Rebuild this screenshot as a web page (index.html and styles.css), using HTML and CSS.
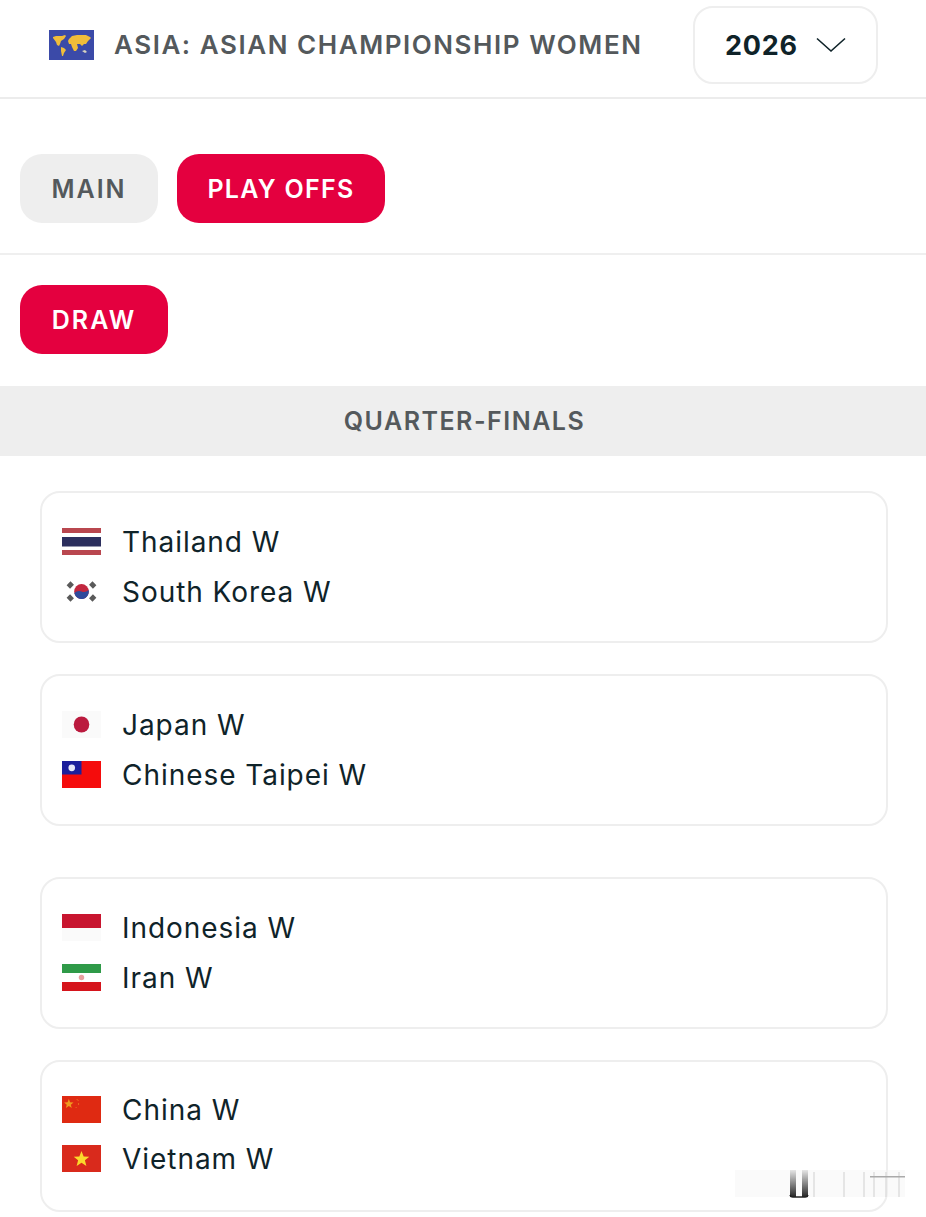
FILE: index.html
```html
<!DOCTYPE html>
<html lang="en">
<head>
<meta charset="utf-8">
<title>Asian Championship Women</title>
<link rel="stylesheet" href="styles.css">
</head>
<body>
<header class="header">
  <div class="league">
    <svg class="league-flag" viewBox="0 0 45 30"><rect width="45" height="30" fill="#3b4aa8"/><path d="M4 7l3-1 6 0 3-1 1 1-2 3-3 2-1 3-1 2-2-1-1-3-3-4z" fill="#f0bd3a"/><path d="M12 17l3 1 2 2-2 3-1 3-1 0-1-5z" fill="#f0bd3a"/><path d="M20 9l3-3 5-1 9 0 4 2 1 1-3 3-2 3-2 0-2 2-2-2-3 0 1 4-2 3-2 0-2-4-1-3-2 0-1-3 1-2z" fill="#f0bd3a"/><path d="M33 21l3-1 2 2-2 1z" fill="#d8d4c0"/></svg>
    <span class="league-name">ASIA: ASIAN CHAMPIONSHIP WOMEN</span>
  </div>
  <div class="season">
    <span class="season-year">2026</span>
    <svg class="chevron" viewBox="0 0 30 16"><path d="M1 1.5L15 14 29 1.5" fill="none" stroke="#0f2329" stroke-width="1.6"/></svg>
  </div>
</header>

<nav class="tabs tabs-main">
  <a class="pill pill-main">MAIN</a>
  <a class="pill pill-active pill-wide">PLAY OFFS</a>
</nav>
<nav class="tabs tabs-sub">
  <a class="pill pill-active pill-draw">DRAW</a>
</nav>

<h2 class="round">QUARTER-FINALS</h2>

<main class="bracket">
  <section class="group">
    <article class="card">
      <div class="team">
        <svg class="flag" viewBox="0 0 40 27" preserveAspectRatio="none"><rect width="40" height="27" fill="#fff"/><rect width="40" height="5" fill="#b9474f"/><rect y="9" width="40" height="9.5" fill="#2c2f5e"/><rect y="22" width="40" height="5" fill="#b9474f"/></svg>
        <span class="team-name">Thailand W</span>
      </div>
      <div class="team">
        <svg class="flag flag-soft" viewBox="0 0 40 27" preserveAspectRatio="none"><rect width="40" height="27" fill="#fff"/><circle cx="20" cy="13.500" r="7.500" fill="#c2273f"/><path d="M12.600 15a7.500 7.500 0 0 0 14.800 -3q-3.500 3-7.400 1.500t-7.400 1.500z" fill="#2f4a9c"/><g stroke="#5a5a5a" stroke-width="5"><path d="M6.500 9l4-4M29.500 5l4 4M6.500 18l4 4M29.500 22l4-4"/></g></svg>
        <span class="team-name">South Korea W</span>
      </div>
    </article>
    <article class="card">
      <div class="team">
        <svg class="flag" viewBox="0 0 40 27" preserveAspectRatio="none"><rect width="40" height="27" fill="#fafafa"/><circle cx="20" cy="13.500" r="8" fill="#bb1a3e"/></svg>
        <span class="team-name">Japan W</span>
      </div>
      <div class="team">
        <svg class="flag" viewBox="0 0 40 27" preserveAspectRatio="none"><rect width="40" height="27" fill="#f50c0c"/><rect width="20" height="13.500" fill="#1c1f9c"/><circle cx="10" cy="6.800" r="3.400" fill="#e8e8f8"/></svg>
        <span class="team-name">Chinese Taipei W</span>
      </div>
    </article>
  </section>
  <section class="group">
    <article class="card">
      <div class="team">
        <svg class="flag" viewBox="0 0 40 27" preserveAspectRatio="none"><rect width="40" height="27" fill="#fafafa"/><rect width="40" height="14" fill="#c8152f"/></svg>
        <span class="team-name">Indonesia W</span>
      </div>
      <div class="team">
        <svg class="flag" viewBox="0 0 40 27" preserveAspectRatio="none"><rect width="40" height="27" fill="#fff"/><rect width="40" height="9" fill="#2f9a48"/><rect y="18" width="40" height="9" fill="#d5141c"/><circle cx="20" cy="13.500" r="2.800" fill="#eaa0a0"/></svg>
        <span class="team-name">Iran W</span>
      </div>
    </article>
    <article class="card card-tight">
      <div class="team">
        <svg class="flag" viewBox="0 0 40 27" preserveAspectRatio="none"><rect width="40" height="27" fill="#df2a12"/><polygon points="7,3 8.300,6.300 11.800,6.500 9.100,8.700 10,12 7,10.100 4,12 4.900,8.700 2.200,6.500 5.700,6.300" fill="#f09a20"/><path d="M15 3l2 2M17 7v2M15 11l-1 1" stroke="#ea6a20" stroke-width="1"/></svg>
        <span class="team-name">China W</span>
      </div>
      <div class="team">
        <svg class="flag" viewBox="0 0 40 27" preserveAspectRatio="none"><rect width="40" height="27" fill="#d92a1c"/><polygon points="20,6 22.200,11.500 28,11.700 23.500,15.300 25,21 20,17.800 15,21 16.500,15.300 12,11.700 17.800,11.500" fill="#fbd92c"/></svg>
        <span class="team-name">Vietnam W</span>
      </div>
    </article>
  </section>
</main>

<svg class="watermark" viewBox="0 0 180 32">
  <defs>
    <linearGradient id="stem" x1="0" y1="0" x2="0" y2="1"><stop offset="0" stop-color="#000" stop-opacity=".08"/><stop offset="1" stop-color="#000" stop-opacity=".85"/></linearGradient>
  </defs>
  <rect x="5" y="2" width="170" height="27" fill="#f3f3f3" opacity=".4"/>
  <rect x="60" y="2" width="6" height="27" fill="url(#stem)"/>
  <rect x="72" y="2" width="6" height="27" fill="url(#stem)"/>
  <path d="M60 27a3 3 0 0 0 3 2h12a3 3 0 0 0 3-2" fill="none" stroke="#222" stroke-width="1.500"/>
  <g fill="#ddd" opacity=".7">
    <rect x="83" y="4" width="2" height="25"/><rect x="113" y="4" width="2" height="25"/><rect x="133" y="4" width="2" height="25"/><rect x="143" y="4" width="2" height="25"/><rect x="155" y="4" width="2" height="25"/><rect x="168" y="4" width="2" height="25"/>
  </g>
  <rect x="140" y="8" width="35" height="1.500" fill="#aaa"/>
</svg>
</body>
</html>
```

FILE: styles.css
```css
* { box-sizing: border-box; }
html, body { margin: 0; padding: 0; }
body {
  position: relative;
  height: 1217px;
  overflow: hidden;
  background: #fff;
  color: #0f2329;
  font-family: "Inter", "Noto Sans", sans-serif;
}
.header {
  height: 99px;
  padding: 6px 48px 0 49px;
  display: flex;
  justify-content: space-between;
  align-items: flex-start;
  border-bottom: 2px solid #ececec;
}
.league { display: flex; align-items: center; gap: 20px; height: 77px; }
.league-flag { width: 45px; height: 30px; display: block; }
.league-name {
  font-size: 26px;
  font-weight: 600;
  letter-spacing: 1.55px;
  color: #54595c;
  white-space: nowrap;
}
.season {
  width: 185px;
  height: 78px;
  border: 2px solid #eeeeee;
  border-radius: 20px;
  padding: 0 30px 0 30px;
  display: flex;
  align-items: center;
  justify-content: space-between;
}
.season-year { font-size: 27px; font-weight: 700; letter-spacing: 0.8px; }
.chevron { width: 30px; height: 16px; display: block; }
.tabs { display: flex; gap: 19px; padding: 0 20px; }
.tabs-main { padding-top: 55px; padding-bottom: 30px; border-bottom: 2px solid #efefef; }
.tabs-sub { padding-top: 30px; padding-bottom: 32px; }
.pill {
  height: 69px;
  width: 138px;
  border-radius: 22px;
  display: flex;
  align-items: center;
  justify-content: center;
  font-size: 25px;
  font-weight: 600;
  letter-spacing: 2px;
  background: #eeeeee;
  color: #54595c;
}
.pill-active { background: #e4003f; color: #fff; }
.pill-wide { width: 208px; letter-spacing: 1.3px; }
.pill-draw { width: 148px; }
.round {
  margin: 0;
  height: 70px;
  padding-left: 3px;
  background: #eeeeee;
  color: #54595c;
  display: flex;
  align-items: center;
  justify-content: center;
  font-size: 25px;
  font-weight: 600;
  letter-spacing: 1.5px;
}
.bracket { padding: 35px 38px 0 40px; display: flex; flex-direction: column; gap: 51px; }
.group { display: flex; flex-direction: column; gap: 31px; }
.card {
  height: 152px;
  border: 2px solid #eeeeee;
  border-radius: 20px;
  padding: 0 19px 0 20px;
  display: flex;
  flex-direction: column;
  justify-content: center;
  gap: 24px;
}
.card-tight { gap: 23px; padding-bottom: 3px; }
.team { display: flex; align-items: center; gap: 21px; height: 26px; }
.flag { width: 39px; height: 27px; display: block; flex: none; margin-bottom: 2px; }
.flag-soft { filter: blur(0.6px); }
.team-name { font-size: 28px; letter-spacing: 0.95px; color: #0f2329; white-space: nowrap; }
.watermark { position: absolute; left: 730px; top: 1168px; width: 180px; height: 32px; }
```
